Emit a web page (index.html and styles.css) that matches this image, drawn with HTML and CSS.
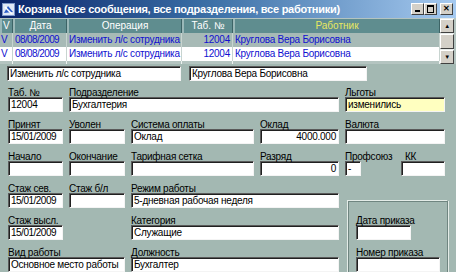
FILE: index.html
```html
<!DOCTYPE html>
<html lang="ru">
<head>
  <meta charset="UTF-8">
  <title>Корзина</title>
  <link rel="stylesheet" href="styles.css">
</head>
<body>
  <div class="window">
    <div class="titlebar">
      <svg class="app-icon" width="13" height="13" viewBox="0 0 13 13">
        <rect x="0.5" y="0.5" width="12" height="12" fill="#dfe8f5" stroke="#7d97c9"/>
        <path d="M2 10 L6 3 L11 9 Z" fill="#2a5cc8"/>
        <path d="M3 4 L10 11" stroke="#ffffff" stroke-width="1.5"/>
      </svg>
      <div class="title">Корзина (все сообщения, все подразделения, все работники)</div>
      <div class="caption-btns">
        <div class="cbtn"><span class="min-glyph"></span></div>
        <div class="cbtn"><span class="max-glyph"></span></div>
        <div class="cbtn close">&#x2715;</div>
      </div>
    </div>

    <div class="grid">
      <div class="grid-body">
        <div class="grow head">
          <div class="c c-v">V</div>
          <div class="c c-date">Дата</div>
          <div class="c c-op">Операция</div>
          <div class="c c-tab">Таб. №</div>
          <div class="c c-name yellow">Работник</div>
        </div>
        <div class="grow alt">
          <div class="c c-v">V</div>
          <div class="c c-date">08/08/2009</div>
          <div class="c c-op">Изменить л/с сотрудника</div>
          <div class="c c-tab num">12004</div>
          <div class="c c-name">Круглова Вера Борисовна</div>
        </div>
        <div class="grow sel">
          <div class="c c-v">V</div>
          <div class="c c-date">08/08/2009</div>
          <div class="c c-op">Изменить л/с сотрудника</div>
          <div class="c c-tab num">12004</div>
          <div class="c c-name">Круглова Вера Борисовна</div>
        </div>
        <div class="grow empty">
          <div class="c c-v"></div>
          <div class="c c-date"></div>
          <div class="c c-op"></div>
          <div class="c c-tab"></div>
          <div class="c c-name"></div>
        </div>
      </div>
      <div class="vscroll">
        <div class="sbtn">&#9650;</div>
        <div class="thumb"></div>
        <div class="sbtn">&#9660;</div>
      </div>
    </div>

    <div class="form">
      <div class="top-row">
        <div class="inp w-op">Изменить л/с сотрудника</div>
        <div class="inp w-name">Круглова Вера Борисовна</div>
      </div>

      <div class="fields">
        <div class="f"><div class="lbl">Таб. №</div><div class="inp">12004</div></div>
        <div class="f span3"><div class="lbl">Подразделение</div><div class="inp">Бухгалтерия</div></div>
        <div class="f"><div class="lbl">Льготы</div><div class="inp hl">изменились</div></div>

        <div class="f"><div class="lbl">Принят</div><div class="inp date">15/01/2009</div></div>
        <div class="f"><div class="lbl">Уволен</div><div class="inp"></div></div>
        <div class="f"><div class="lbl">Система оплаты</div><div class="inp">Оклад</div></div>
        <div class="f"><div class="lbl">Оклад</div><div class="inp num">4000.000</div></div>
        <div class="f"><div class="lbl">Валюта</div><div class="inp"></div></div>

        <div class="f"><div class="lbl">Начало</div><div class="inp"></div></div>
        <div class="f"><div class="lbl">Окончание</div><div class="inp"></div></div>
        <div class="f"><div class="lbl">Тарифная сетка</div><div class="inp"></div></div>
        <div class="f"><div class="lbl">Разряд</div><div class="inp num">0</div></div>
        <div class="f pair">
          <div class="sub"><div class="lbl">Профсоюз</div><div class="inp tiny">-</div></div>
          <div class="sub kk"><div class="lbl">КК</div><div class="inp"></div></div>
        </div>

        <div class="order-frame"></div>
        <div class="f order-f row5"><div class="lbl">Дата приказа</div><div class="inp w-date"></div></div>
        <div class="f order-f row6"><div class="lbl">Номер приказа</div><div class="inp w-num"></div></div>

        <div class="f"><div class="lbl">Стаж сев.</div><div class="inp date">15/01/2009</div></div>
        <div class="f"><div class="lbl">Стаж б/л</div><div class="inp"></div></div>
        <div class="f span2"><div class="lbl">Режим работы</div><div class="inp">5-дневная рабочая неделя</div></div>

        <div class="f"><div class="lbl">Стаж высл.</div><div class="inp date">15/01/2009</div></div>
        <div class="f skip"></div>
        <div class="f span2"><div class="lbl">Категория</div><div class="inp">Служащие</div></div>

        <div class="f span2"><div class="lbl">Вид работы</div><div class="inp">Основное место работы</div></div>
        <div class="f span2"><div class="lbl">Должность</div><div class="inp">Бухгалтер</div></div>
      </div>
    </div>
  </div>
</body>
</html>
```

FILE: styles.css
```css
body {
  margin: 0;
  background: #a3b8b2;
  font-family: 'Liberation Sans', Arial, sans-serif;
  font-size: 10px;
  letter-spacing: -0.25px;
  color: #000;
  overflow: hidden;
}

.window {
  width: 456px;
  height: 272px;
  background: #a3b8b2;
  overflow: hidden;
}

/* заголовок окна */
.titlebar {
  height: 18px;
  display: flex;
  align-items: center;
  background: linear-gradient(to right, #0a246a 0%, #3a6ea5 45%, #a6caf0 100%);
  padding: 0 3px 0 2px;
  box-sizing: border-box;
}

.app-icon {
  flex: none;
  margin-right: 3px;
}

.title {
  flex: 1;
  color: #fff;
  font-weight: bold;
  font-size: 11px;
  letter-spacing: -0.25px;
  white-space: nowrap;
}

.caption-btns {
  display: flex;
}

.cbtn {
  width: 11px;
  height: 10px;
  background: #d4d0c8;
  border: 1px solid;
  border-color: #fff #404040 #404040 #fff;
  position: relative;
  font-size: 8px;
  font-weight: bold;
  line-height: 10px;
  text-align: center;
  color: #000;
  letter-spacing: 0;
}

.cbtn.close {
  margin-left: 3px;
}

.min-glyph {
  position: absolute;
  left: 3px;
  bottom: 2px;
  width: 5px;
  height: 2px;
  background: #000;
}

.max-glyph {
  position: absolute;
  left: 2px;
  top: 1px;
  width: 5px;
  height: 5px;
  border: 1px solid #000;
  border-top-width: 2px;
}

/* таблица сообщений */
.grid {
  display: flex;
  height: 46px;
  background: #b4c4c0;
}

.grid-body {
  flex: 1;
}

.grow {
  display: flex;
  height: 14px;
}

.c {
  box-sizing: border-box;
  padding: 0 2px;
  line-height: 14px;
  white-space: nowrap;
  overflow: hidden;
  border-right: 1px solid #c8d4d0;
  color: #1010d0;
}

.c-v { width: 13px; padding: 0 1px; }
.c-date { width: 54px; letter-spacing: -0.6px; }
.c-op { width: 115px; }
.c-tab { width: 51px; }
.c-name { flex: 1; }

.num { text-align: right; }

.head {
  margin-top: 1px;
  background: #5f8d8f;
}

.head .c {
  color: #fff;
  text-align: center;
  border-left: 2px solid #9ab8b8;
  border-right: 1px solid #3d6466;
  letter-spacing: 0;
}

.head .c-v { text-align: left; }

.head .yellow { color: #e8e860; }

.alt .c { background: #a7bab6; }
.sel .c { background: #fff; }

.empty {
  height: 3px;
}

.empty .c {
  border-right: 1px solid #eef2f0;
}

.vscroll {
  width: 14px;
  margin-right: 2px;
  display: flex;
  flex-direction: column;
  background: #e8ecea;
  padding-top: 1px;
}

.sbtn {
  height: 12px;
  background: #d4d0c8;
  border: 1px solid;
  border-color: #fff #404040 #404040 #fff;
  font-size: 6px;
  line-height: 12px;
  text-align: center;
}

.thumb {
  height: 13px;
  margin: 1px 0;
  background: #d4d0c8;
  border: 1px solid;
  border-color: #fff #404040 #404040 #fff;
}

/* форма */
.form {
  padding: 2px 8px 0 7px;
}

.inp {
  box-sizing: border-box;
  height: 15px;
  background: #fff;
  border: 1px solid;
  border-color: #5a5a5a #f4f4f4 #f4f4f4 #5a5a5a;
  box-shadow: inset 1px 1px 0 #202020;
  padding: 0 2px;
  line-height: 13px;
  white-space: nowrap;
  overflow: hidden;
}

.inp.hl { background: #ffffc0; }
.inp.date { letter-spacing: -0.5px; }

.top-row {
  display: flex;
  gap: 8px;
}

.w-op { width: 174px; }
.w-name { width: 178px; }

.fields {
  display: grid;
  grid-template-columns: 55px 56px 123px 79px 100px;
  column-gap: 6px;
  row-gap: 3px;
  margin: 2px 0 0 1px;
}

.lbl {
  height: 14px;
  line-height: 14px;
  padding-top: 3px;
  box-sizing: border-box;
  color: #000;
  white-space: nowrap;
}

.f { min-width: 0; }

.span2 { grid-column: span 2; }
.span3 { grid-column: span 3; }

.pair {
  display: flex;
  justify-content: space-between;
}

.sub .tiny { width: 16px; }

.kk { width: 44px; }
.kk .lbl { padding-left: 4px; }

/* рамка "приказ" */
.order-frame {
  grid-column: 5;
  grid-row: 4 / span 3;
  margin: 21px -3px -20px 2px;
  border: 1px solid;
  border-color: #e4ece8 #6f8580 #6f8580 #e4ece8;
  box-shadow: inset 1px 1px 0 #6f8580, 1px 1px 0 #e4ece8;
}

.order-f {
  grid-column: 5;
  padding-left: 11px;
  position: relative;
}

.row5 { grid-row: 5; }
.row6 { grid-row: 6; }

.w-date { width: 55px; }
.w-num { width: 84px; }

.skip { grid-column: 2; }
```
